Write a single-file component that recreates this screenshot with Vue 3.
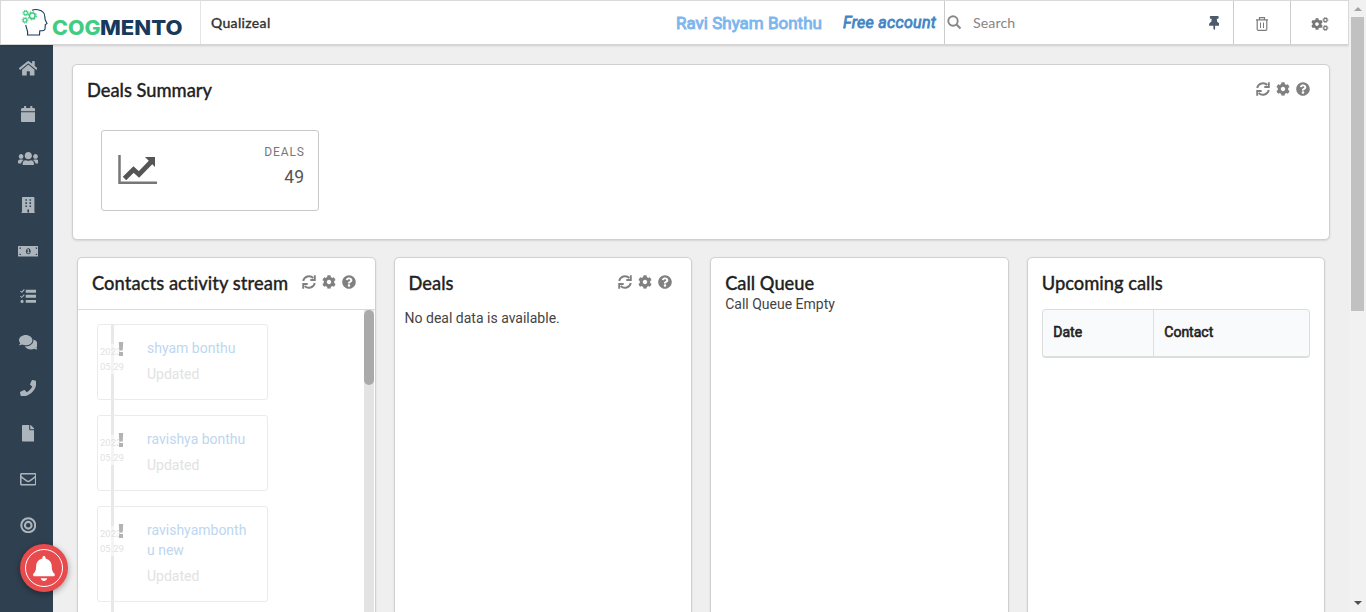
<script setup>
const icons = {
  home: { box: '0 0 576 512', d: 'M280.37 148.26L96 300.11V464a16 16 0 0 0 16 16l112.06-.29a16 16 0 0 0 15.92-16V368a16 16 0 0 1 16-16h64a16 16 0 0 1 16 16v95.64a16 16 0 0 0 16 16.05L464 480a16 16 0 0 0 16-16V300L295.67 148.26a12.19 12.19 0 0 0-15.3 0zM571.6 251.47L488 182.56V44.05a12 12 0 0 0-12-12h-56a12 12 0 0 0-12 12v72.61L318.47 43a48 48 0 0 0-61 0L4.34 251.47a12 12 0 0 0-1.6 16.9l25.5 31A12 12 0 0 0 45.15 301l235.22-193.74a12.19 12.19 0 0 1 15.3 0L530.9 301a12 12 0 0 0 16.9-1.6l25.5-31a12 12 0 0 0-1.7-16.93z' },
  calendar: { box: '0 0 448 512', d: 'M12 192h424c6.6 0 12 5.4 12 12v260c0 26.5-21.5 48-48 48H48c-26.5 0-48-21.5-48-48V204c0-6.6 5.4-12 12-12zm436-44v-36c0-26.5-21.5-48-48-48h-48V12c0-6.6-5.4-12-12-12h-40c-6.6 0-12 5.4-12 12v52H160V12c0-6.6-5.4-12-12-12h-40c-6.6 0-12 5.4-12 12v52H48C21.5 64 0 85.5 0 112v36c0 6.6 5.4 12 12 12h424c6.6 0 12-5.4 12-12z' },
  users: { box: '0 0 640 512', d: 'M96 240c39 0 72-32 72-72s-33-72-72-72-72 32-72 72 33 72 72 72zM544 240c39 0 72-32 72-72s-33-72-72-72-72 32-72 72 33 72 72 72zM576 260h-64c-17.6 0-33.5 7.1-45.1 18.6 40.3 22.1 68.9 62 75.1 109.4h82c9 0 16-7 16-16v-48c0-35.3-28.7-64-64-64zM320 256c61.9 0 112-50.1 112-112S381.9 32 320 32 208 82.1 208 144s50.1 112 112 112zM396.800 288h-8.3c-20.8 10-43.9 16-68.5 16s-47.6-6-68.5-16h-8.3C179.6 288 144 339.6 144 403.2V416c0 10 6 16 16 16h320c10 0 16-6 16-16v-12.800c0-63.6-35.6-115.2-99.2-115.2zM173.100 278.600C161.5 267.1 145.6 260 128 260H64c-35.3 0-64 28.7-64 64v48c0 9 7 16 16 16h81.900c6.3-47.4 34.9-87.3 75.2-109.4z' },
  building: { box: '0 0 448 512', d: 'M436 480h-20V24c0-13-11-24-24-24H56C43 0 32 11 32 24v456H12c-7 0-12 5-12 12v20h448v-20c0-7-5-12-12-12zM136 70h48v48h-48zM136 166h48v48h-48zM136 262h48v48h-48zM264 70h48v48h-48zM264 166h48v48h-48zM264 262h48v48h-48zM198 390h52v90h-52z' },
  money: { box: '0 0 640 512', d: 'M16 96H624a16 16 0 0 1 16 16V400a16 16 0 0 1-16 16H16a16 16 0 0 1-16-16V112a16 16 0 0 1 16-16zM48 136V184A48 48 0 0 0 96 136zM544 136A48 48 0 0 0 592 184V136zM48 328V376H96A48 48 0 0 0 48 328zM592 328A48 48 0 0 0 544 376H592zM320 160C275 160 246 203 246 256S275 352 320 352 394 309 394 256 365 160 320 160zM298 196H338V290H360V318H282V290H304V226H284V202z' },
  tasks: { box: '0 0 512 512', d: 'M20 82L54 112 122 34 146 56 60 154 0 104zM20 242L54 272 122 194 146 216 60 314 0 264zM64 368a48 48 0 1 1 0 96 48 48 0 0 1 0-96zM192 56H496a16 16 0 0 1 16 16v56a16 16 0 0 1-16 16H192a16 16 0 0 1-16-16V72a16 16 0 0 1 16-16zM192 212H496a16 16 0 0 1 16 16v56a16 16 0 0 1-16 16H192a16 16 0 0 1-16-16v-56a16 16 0 0 1 16-16zM192 370H496a16 16 0 0 1 16 16v56a16 16 0 0 1-16 16H192a16 16 0 0 1-16-16v-56a16 16 0 0 1 16-16z' },
  comments: { box: '0 0 576 512', d: 'M416 192c0-88.4-93.1-160-208-160S0 103.6 0 192c0 34.3 14.1 65.9 38 92-13.4 30.2-35.5 54.2-35.8 54.5-2.2 2.3-2.8 5.7-1.5 8.7S4.8 352 8 352c36.6 0 66.9-12.3 88.7-25 32.2 15.7 70.3 25 111.3 25 114.9 0 208-71.6 208-160zm122 220c23.9-26 38-57.7 38-92 0-66.9-53.5-124.2-129.3-148.1.9 6.6 1.3 13.3 1.3 20.1 0 105.9-107.7 192-240 192-10.8 0-21.3-.8-31.7-1.9C207.8 439.6 281.8 480 368 480c41 0 79.1-9.2 111.3-25 21.8 12.7 52.1 25 88.7 25 3.2 0 6.1-1.9 7.3-4.8 1.3-2.9.7-6.3-1.5-8.7-.3-.3-22.4-24.2-35.8-54.5z' },
  phone: { box: '0 0 512 512', d: 'M493.4 24.6l-104-24c-11.3-2.6-22.9 3.3-27.5 13.9l-48 112c-4.2 9.8-1.4 21.3 6.9 28l60.6 49.6c-36 76.7-98.9 140.5-177.2 177.2l-49.6-60.6c-6.8-8.3-18.2-11.1-28-6.9l-112 48C3.9 366.5-2 378.1.6 389.4l24 104C27.1 504.2 36.7 512 48 512c256.1 0 464-207.5 464-464 0-11.2-7.7-20.9-18.6-23.4z' },
  file: { box: '0 0 384 512', d: 'M224 136V0H24C10.7 0 0 10.7 0 24v464c0 13.3 10.7 24 24 24h336c13.3 0 24-10.7 24-24V160H248c-13.2 0-24-10.8-24-24zm160-14.1v6.1H256V0h6.1c6.4 0 12.5 2.5 17 7l97.9 98c4.5 4.5 7 10.6 7 16.9z' },
  mail: { box: '0 0 512 512', d: 'M464 64H48C21.49 64 0 85.49 0 112v288c0 26.51 21.49 48 48 48h416c26.51 0 48-21.49 48-48V112c0-26.51-21.49-48-48-48zm0 48v40.805c-22.422 18.259-58.168 46.651-134.587 106.49-16.841 13.247-50.201 45.072-73.413 44.701-23.208.375-56.579-31.459-73.413-44.701C106.18 199.465 70.425 171.067 48 152.805V112h416zM48 400V214.398c22.914 18.251 55.409 43.862 104.938 82.646 21.857 17.205 60.134 55.186 103.062 54.955 42.717.231 80.509-37.199 103.053-54.947 49.528-38.783 82.032-64.401 104.947-82.653V400H48z' },
  target: { box: '0 0 512 512', d: 'M256 8a248 248 0 1 0 0 496 248 248 0 0 0 0-496zM256 72a184 184 0 1 1 0 368 184 184 0 0 1 0-368zM256 120a136 136 0 1 0 0 272 136 136 0 0 0 0-272zM256 184a72 72 0 1 1 0 144 72 72 0 0 1 0-144z' },
  bell: { box: '0 0 448 512', d: 'M224 512c35.32 0 63.97-28.65 63.97-56H160.03c0 27.35 28.65 56 63.97 56zm215.39-149.71c-19.32-20.76-55.47-51.99-55.47-154.29 0-77.7-54.48-139.9-127.94-155.16V32c0-17.67-14.32-32-31.98-32s-31.98 14.33-31.98 32v20.84C118.56 68.1 64.08 130.3 64.08 208c0 102.3-36.15 133.53-55.47 154.29-6 6.45-8.66 14.16-8.61 21.71.11 16.4 12.98 32 32.1 32h383.8c19.12 0 32-15.6 32.1-32 .05-7.55-2.61-15.27-8.61-21.71z' },
  cog: { box: '0 0 512 512', d: 'M487.4 315.7l-42.6-24.6c4.3-23.2 4.3-47 0-70.2l42.6-24.6c4.9-2.8 7.1-8.6 5.5-14-11.1-35.6-30-67.8-54.7-94.6-3.8-4.1-10-5.1-14.8-2.3L380.8 110c-17.9-15.4-38.5-27.3-60.8-35.1V25.8c0-5.6-3.9-10.5-9.4-11.7-36.7-8.2-74.3-7.8-109.2 0-5.5 1.2-9.4 6.1-9.4 11.7V75c-22.2 7.9-42.8 19.8-60.8 35.1L88.7 85.5c-4.9-2.8-11-1.9-14.8 2.3-24.7 26.7-43.6 58.9-54.7 94.6-1.7 5.4.6 11.2 5.5 14L67.3 221c-4.3 23.2-4.3 47 0 70.2l-42.6 24.6c-4.9 2.8-7.1 8.6-5.5 14 11.1 35.6 30 67.8 54.7 94.6 3.8 4.1 10 5.1 14.8 2.3l42.6-24.6c17.9 15.4 38.5 27.3 60.8 35.1v49.2c0 5.6 3.9 10.5 9.4 11.7 36.7 8.2 74.3 7.8 109.2 0 5.5-1.2 9.4-6.1 9.4-11.7v-49.2c22.2-7.9 42.8-19.8 60.8-35.1l42.6 24.6c4.9 2.8 11 1.9 14.8-2.3 24.7-26.7 43.6-58.9 54.7-94.6 1.5-5.5-.7-11.3-5.6-14.1zM256 336c-44.1 0-80-35.9-80-80s35.9-80 80-80 80 35.9 80 80-35.9 80-80 80z' },
  help: { box: '0 0 512 512', d: 'M504 256c0 136.997-111.043 248-248 248S8 392.997 8 256C8 119.083 119.043 8 256 8s248 111.083 248 248zM262.655 90c-54.497 0-89.255 22.957-116.549 63.758-3.536 5.286-2.353 12.415 2.715 16.258l34.699 26.31c5.205 3.947 12.621 3.008 16.665-2.122 17.864-22.658 30.113-35.797 57.303-35.797 20.429 0 45.698 13.148 45.698 32.958 0 14.976-12.363 22.667-32.534 33.976C247.128 238.528 216 254.941 216 296v4c0 6.627 5.373 12 12 12h56c6.627 0 12-5.373 12-12v-1.333c0-28.462 83.186-29.647 83.186-106.667 0-58.002-60.165-102-116.531-102zM256 338c-25.365 0-46 20.635-46 46 0 25.364 20.635 46 46 46s46-20.636 46-46c0-25.365-20.635-46-46-46z' },
  pin: { box: '0 0 384 512', d: 'M298.028 214.267L285.793 96H328c13.255 0 24-10.745 24-24V24c0-13.255-10.745-24-24-24H56C42.745 0 32 10.745 32 24v48c0 13.255 10.745 24 24 24h42.207L85.972 214.267C37.465 236.82 0 277.261 0 328c0 13.255 10.745 24 24 24h136v104.007c0 1.242.289 2.467.845 3.578l24 48c2.941 5.882 11.364 5.893 14.311 0l24-48a8.008 8.008 0 0 0 .845-3.578V352h136c13.255 0 24-10.745 24-24-.001-51.183-37.983-91.42-85.973-113.733z' },
}
const nav = ['home', 'calendar', 'users', 'building', 'money', 'tasks', 'comments', 'phone', 'file', 'mail', 'target']
const panels = [
  { title: 'Contacts activity stream', kind: 'stream', tools: true },
  { title: 'Deals', kind: 'deals', tools: true },
  { title: 'Call Queue', kind: 'queue', tools: false },
  { title: 'Upcoming calls', kind: 'calls', tools: false },
]
const events = ['shyam bonthu', 'ravishya bonthu', 'ravishyambonthu new']
</script>

<template>
  <div class="page">
    <header class="topbar">
      <div class="brand">
        <svg width="170" height="36" viewBox="0 0 170 36">
          <g fill="none" stroke="#17395c" stroke-width="1.1">
            <path d="M11 2.300C14 1 20 1.200 22.500 4.500C24.500 7 23.500 10 24.300 12L26 15.600L24.300 16.600L24 21C23.800 23 22 22.800 18.800 22.800L18.500 27H6.500C7.500 22 5 20.500 4.800 17" />
          </g>
          <g fill="none" stroke="#40cd83">
            <circle cx="11.300" cy="7.800" r="2.800" stroke-width="1.600" />
            <circle cx="11.300" cy="7.800" r="4" stroke-width="1.200" stroke-dasharray="1.570 1.570" />
            <circle cx="4.600" cy="5" r="1.800" stroke-width="1.200" />
            <circle cx="4.600" cy="5" r="2.700" stroke-width="1" stroke-dasharray="1.060 1.060" />
            <circle cx="4" cy="12.200" r="1.900" stroke-width="1.200" />
            <circle cx="4" cy="12.200" r="2.900" stroke-width="1" stroke-dasharray="1.140 1.140" />
          </g>
          <text class="logo green" x="31" y="26.700" textLength="48.500" lengthAdjust="spacingAndGlyphs">COG</text>
          <text class="logo navy" x="79" y="26.700" textLength="82.500" lengthAdjust="spacingAndGlyphs">MENTO</text>
        </svg>
      </div>
      <div class="company">Qualizeal</div>
      <div class="user">Ravi Shyam Bonthu</div>
      <div class="plan">Free account</div>
      <div class="search">
        <svg width="15" height="15" viewBox="0 0 15 15" fill="none" stroke="#888" stroke-width="1.900">
          <circle cx="6" cy="6" r="4.700" /><path d="M9.500 9.500L13.500 13.500" stroke-width="2.200" />
        </svg>
        <span>Search</span>
        <svg class="pin" :viewBox="icons.pin.box"><path :d="icons.pin.d" /></svg>
      </div>
      <div class="tool trash">
        <svg width="12" height="14" viewBox="0 0 12 14" fill="none" stroke="#7c7c7c">
          <path d="M0 2.800H12M3.500 2.500V.7H8.500V2.500M1.200 3V12.300Q1.200 13.400 2.300 13.400H9.700Q10.800 13.400 10.800 12.300V3" stroke-width="1.200" /><path d="M4.500 5.500V11M7.500 5.500V11" stroke-width="1" />
        </svg>
      </div>
      <div class="tool gears">
        <svg width="18" height="14" viewBox="0 0 18 14">
          <svg x="0" y="1" width="12" height="12" :viewBox="icons.cog.box"><path fill="#777" fill-rule="evenodd" :d="icons.cog.d" /></svg>
          <g fill="none" stroke="#777"><circle cx="14.400" cy="3" r="1.700" stroke-width="1.200" /><circle cx="14.400" cy="3" r="2.500" stroke-dasharray="1.100 .86" stroke-width=".9" /><circle cx="14.400" cy="11" r="1.700" stroke-width="1.200" /><circle cx="14.400" cy="11" r="2.500" stroke-dasharray="1.100 .86" stroke-width=".9" /></g>
        </svg>
      </div>
    </header>

    <div class="body">
      <nav class="sidebar">
        <a v-for="n in nav" :key="n"><svg :viewBox="icons[n].box"><path fill-rule="evenodd" :d="icons[n].d" /></svg></a>
      </nav>
      <main>
        <section class="card summary">
          <div class="head">
            <h2>Deals Summary</h2>
            <div class="tools">
              <svg viewBox="0 0 14 14" class="sync"><path d="M1.200 6A6 6 0 0 1 11.300 3M12.800 8A6 6 0 0 1 2.700 11" /><path d="M12.800 .3V5H8.300M1.200 13.700V9H5.700" /></svg>
              <svg :viewBox="icons.cog.box"><path fill-rule="evenodd" :d="icons.cog.d" /></svg>
              <svg :viewBox="icons.help.box"><path fill-rule="evenodd" :d="icons.help.d" /></svg>
            </div>
          </div>
          <div class="stat">
            <svg width="40" height="32" viewBox="0 0 40 32"><path d="M1.500 1V28.700H39" fill="none" stroke="#777" stroke-width="2.500" /><path d="M6.500 24.500L15.500 15.500L21 20.500L33 8" fill="none" stroke="#555" stroke-width="4.800" /><path d="M27 3H37V13Z" fill="#555" /></svg>
            <div class="figures"><span>DEALS</span><b>49</b></div>
          </div>
        </section>

        <div class="columns">
          <section v-for="p in panels" :key="p.kind" class="card col" :class="p.kind">
            <div class="head">
              <h2>{{ p.title }}</h2>
              <div v-if="p.tools" class="tools">
                <svg viewBox="0 0 14 14" class="sync"><path d="M1.200 6A6 6 0 0 1 11.300 3M12.800 8A6 6 0 0 1 2.700 11" /><path d="M12.800 .3V5H8.300M1.200 13.700V9H5.700" /></svg>
                <svg :viewBox="icons.cog.box"><path fill-rule="evenodd" :d="icons.cog.d" /></svg>
                <svg :viewBox="icons.help.box"><path fill-rule="evenodd" :d="icons.help.d" /></svg>
              </div>
            </div>
            <div v-if="p.kind === 'stream'" class="scroller">
              <div class="timeline">
                <article v-for="e in events" :key="e">
                  <div class="date">2023<br>05.29</div>
                  <svg class="bang" viewBox="0 0 6 14"><path d="M.8 0H5.200L4.700 8.500H1.300ZM1 10H5V14H1Z" /></svg>
                  <a>{{ e }}</a>
                  <p>Updated</p>
                </article>
              </div>
              <div class="track"><i></i></div>
            </div>
            <p v-else-if="p.kind === 'deals'" class="nodata">No deal data is available.</p>
            <p v-else-if="p.kind === 'queue'" class="empty">Call Queue Empty</p>
            <div v-else class="table"><div>Date</div><div>Contact</div></div>
          </section>
        </div>
      </main>
    </div>

    <div class="pagebar"><i class="up"></i><i class="thumb"></i><i class="down"></i></div>
    <div class="bell"><div><svg :viewBox="icons.bell.box"><path :d="icons.bell.d" /></svg></div></div>
  </div>
</template>

<style>
html, body { margin: 0; overflow: hidden; }
</style>

<style scoped>
* { box-sizing: border-box; }
h2, p { margin: 0; }
.page { position: relative; width: 1366px; height: 612px; overflow: hidden; background: #efefef; font: 14px/20px Roboto, sans-serif; color: #333; }
.topbar { display: flex; width: 1349px; height: 45px; background: #fff; border: 1px solid #d9d9d9; border-bottom: 1px solid #d4d4d4; box-shadow: 0 1px 2px rgba(0,0,0,.14); position: relative; align-items: stretch; }
.brand { width: 200px; border-right: 1px solid #e4e4e4; padding: 7px 0 0 20px; }
.brand svg { display: block; }
.logo { font: 800 20.5px Inter, sans-serif; }
.green { fill: #40cd83; }
.navy { fill: #17395c; }
.company { font: 500 14px/44px "Lato Medium", Lato, sans-serif; -webkit-text-stroke: .3px #333; letter-spacing: .32px; padding-left: 10px; width: 475px; color: #333; }
.user { font: 400 17px/44px Roboto, sans-serif; -webkit-text-stroke: .9px #7db6ee; color: #7db6ee; width: 167px; white-space: nowrap; }
.plan { font: italic 400 16px/43px Roboto, sans-serif; -webkit-text-stroke: .8px #4285c5; letter-spacing: .3px; color: #4285c5; width: 101px; white-space: nowrap; }
.search { flex: 1; display: flex; align-items: center; border-left: 1px solid #ccc; padding-left: 2px; font: 14.200px Lato, sans-serif; color: #858585; }
.search span { margin-left: 11px; letter-spacing: .1px; }
.pin { height: 14px; margin-left: auto; margin-right: 14px; fill: #4b5b6b; }
.tool { display: flex; align-items: center; justify-content: center; border-left: 1px solid #ccc; width: 57px; padding-top: 2px; }
.gears { width: 58px; padding-left: 1px; }
.body { display: flex; height: 567px; }
.sidebar { width: 53px; background: #2f4050; padding-top: .4px; }
.sidebar a { display: flex; height: 45.67px; justify-content: center; align-items: center; padding-left: 3px; }
.sidebar svg { height: 16.500px; fill: #adb5bc; }
main { width: 1296px; padding: 19px 19px 0; }
.card { background: #fff; border: 1px solid #d0d0d0; border-radius: 5px; box-shadow: 0 1px 2px rgba(34,36,38,.12); }
.summary { height: 176px; width: 1258px; }
.head { display: flex; justify-content: space-between; padding: 14px 19px 0 14px; height: 44px; }
h2 { font: 500 18.300px/23px "Lato Medium", Lato, sans-serif; -webkit-text-stroke: .3px #222; color: #222; white-space: nowrap; }
.stream h2 { letter-spacing: .08px; }
.tools { display: flex; gap: 6px; padding-top: 3px; }
.tools svg { width: 14px; height: 14px; fill: #808080; }
.tools .sync { fill: none; stroke: #808080; stroke-width: 1.900; }
.stat { margin: 21px 0 0 28px; width: 218px; height: 81px; border: 1px solid #c9c9c9; border-radius: 3px; display: flex; justify-content: space-between; padding: 13px 14px 0 16px; }
.stat svg { margin-top: 10px; }
.figures { text-align: right; display: flex; flex-direction: column; }
.figures span { font: 12px/16px Roboto, sans-serif; letter-spacing: .9px; color: #777; margin-right: -.8px; }
.figures b { font: 400 17.500px/24px Roboto, sans-serif; color: #555; margin-top: 5px; }
.columns { display: flex; gap: 18px; margin: 17px 0 0 5px; }
.col { width: 298.600px; height: 400px; flex: none; }
.col .head { height: 37px; }
.stream .head { height: 51px; }
.scroller { border-top: 1px solid #d9d9d9; display: flex; justify-content: space-between; height: 349px; }
.timeline { padding: 14px 0 0 19px; background: linear-gradient(#e8e8e8, #e8e8e8) 33px 14px / 3px 100% no-repeat; }
article { position: relative; width: 171px; min-height: 76px; margin-bottom: 15px; border: 1px solid #ebebeb; border-radius: 3px; padding: 13px 20px 15px 49px; }
article a { display: block; width: 101px; color: #bdd7f0; overflow-wrap: anywhere; }
article p { color: #e2e2e2; margin-top: 6px; }
.date { position: absolute; left: 2px; top: 19px; font: 9.5px/15px Roboto, sans-serif; color: #e2e2e2; background: rgba(255,255,255,.5); }
.bang { position: absolute; left: 20px; top: 17px; width: 6px; height: 14px; fill: #b3b3b3; }
.track { width: 10px; background: #e3e3e3; margin-right: 1px; }
.track i { display: block; height: 75px; border-radius: 5px; background: #aaa; }
.nodata { padding: 13px 0 0 10px; color: #444; }
.empty { padding: 0 14px; color: #444; margin-top: -1px; }
.table { display: flex; width: 268px; height: 49px; margin: 14px; border: 1px solid #dcdddd; border-bottom-width: 2px; border-radius: 4px; background: #f9fafb; font: 400 14px/45px Roboto, sans-serif; -webkit-text-stroke: .6px #222; color: #222; }
.table div { padding-left: 10.500px; width: 110px; }
.table div + div { border-left: 1px solid #dedfdf; flex: 1; }
.pagebar { position: absolute; right: 0; top: 0; width: 17px; height: 612px; background: #f1f1f1; display: flex; flex-direction: column; align-items: center; }
.up { border: 4px solid transparent; border-top: 0; border-bottom: 4px solid #a3a3a3; margin-top: 7px; }
.thumb { width: 13px; height: 294px; background: #c1c1c1; margin-top: 6px; }
.down { border: 4px solid transparent; border-bottom: 0; border-top: 4px solid #505050; margin-top: 290px; }
.bell { position: absolute; left: 20px; top: 544px; width: 48px; height: 48px; border-radius: 50%; background: #e84b4e; padding: 5px; box-shadow: 0 2px 6px rgba(0,0,0,.35); }
.bell div { width: 38px; height: 38px; border: 1.500px solid #fff; border-radius: 50%; display: flex; align-items: center; justify-content: center; }
.bell svg { height: 25px; fill: #fff; }
</style>
